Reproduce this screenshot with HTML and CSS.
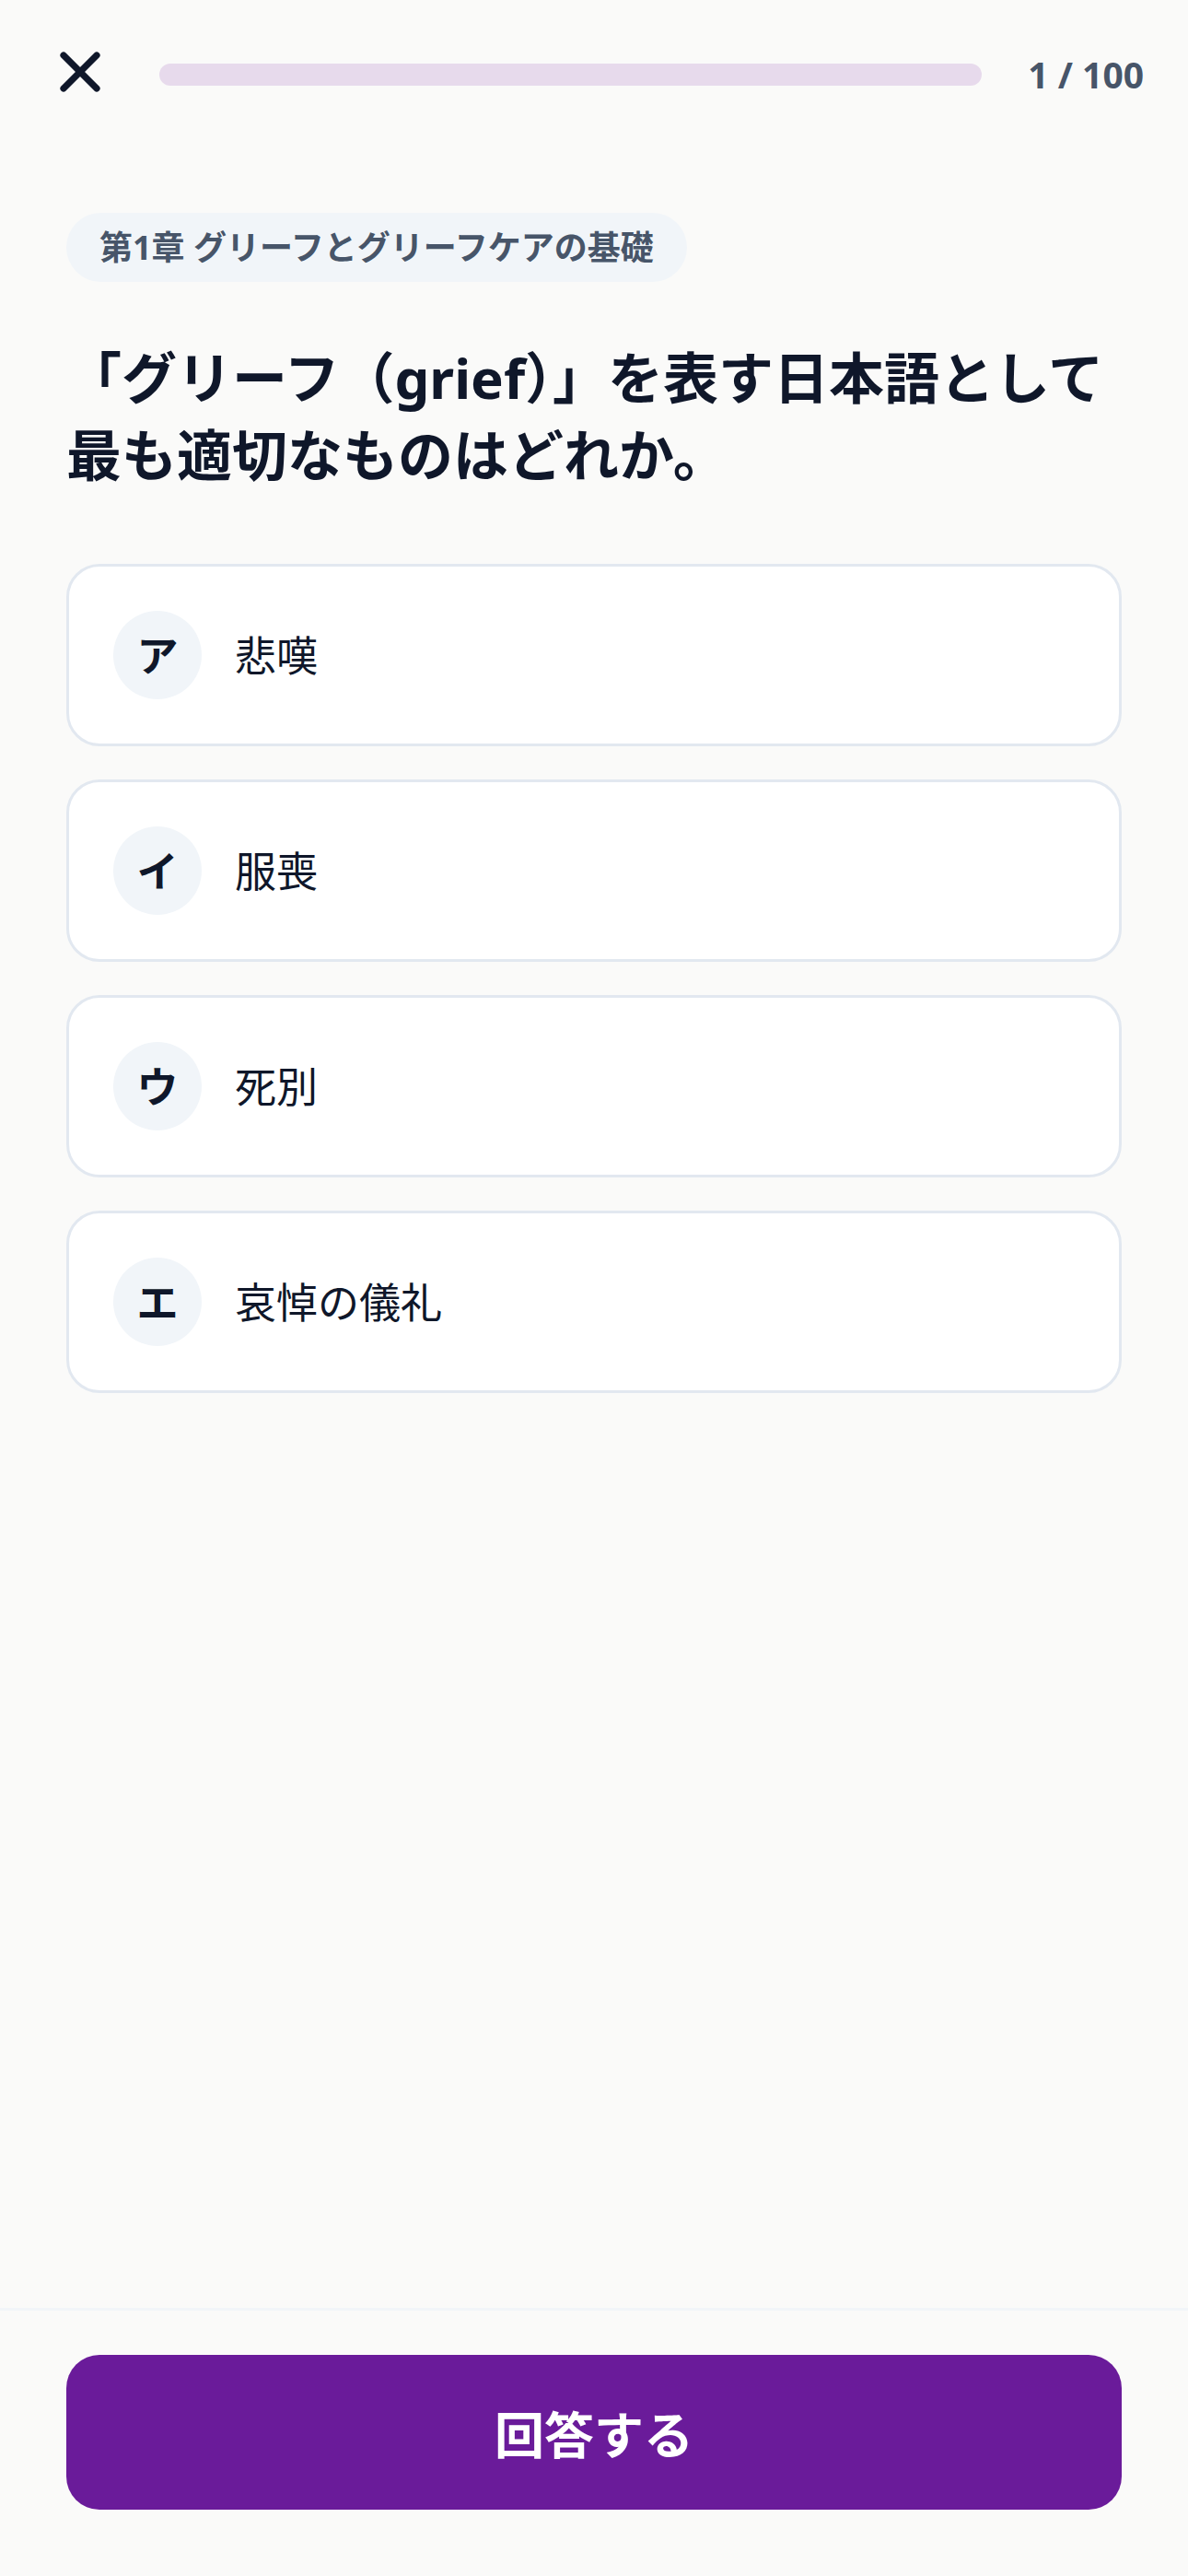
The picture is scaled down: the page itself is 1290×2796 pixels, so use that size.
FILE: index.html
```html
<!DOCTYPE html>
<html lang="ja">
<head>
  <meta charset="utf-8">
  <title>グリーフケア 問題</title>
  <meta name="viewport" content="width=device-width, initial-scale=1.0">
  <link rel="stylesheet" href="styles.css">
</head>
<body>
  <div class="page">
    <!-- ヘッダー: 閉じる / 進捗 / 問題番号 -->
    <header class="quiz-header">
      <button class="close-btn" aria-label="閉じる">
        <svg width="72" height="72" viewBox="0 0 24 24" fill="none" stroke="currentColor" stroke-width="2.4" stroke-linecap="round" stroke-linejoin="round">
          <path d="M18 6 6 18"/>
          <path d="m6 6 12 12"/>
        </svg>
      </button>
      <div class="progress"></div>
      <span class="counter">1 / 100</span>
    </header>

    <main class="quiz-body">
      <span class="chapter">第1章 グリーフとグリーフケアの基礎</span>

      <h1 class="question">「グリーフ（grief）」を表す日本語として最も適切なものはどれか。</h1>

      <!-- 選択肢 -->
      <div class="options">
        <div class="option">
          <span class="option-key">ア</span>
          <span class="option-text">悲嘆</span>
        </div>
        <div class="option">
          <span class="option-key">イ</span>
          <span class="option-text">服喪</span>
        </div>
        <div class="option">
          <span class="option-key">ウ</span>
          <span class="option-text">死別</span>
        </div>
        <div class="option">
          <span class="option-key">エ</span>
          <span class="option-text">哀悼の儀礼</span>
        </div>
      </div>
    </main>

    <footer class="quiz-footer">
      <button class="answer-btn">回答する</button>
    </footer>
  </div>
</body>
</html>
```

FILE: styles.css
```css
/* クイズ画面 (3x スケール) */
body {
  margin: 0;
  padding: 0;
  font-family: "Noto Sans", "Noto Sans CJK JP", sans-serif;
  background: #fafaf9;
  color: #0f172a;
}
.page {
  min-height: 2796px;
  display: flex;
  flex-direction: column;
}
.quiz-header {
  display: flex;
  align-items: center;
  gap: 50px;
  padding: 42px 48px 0 51px;
}
.close-btn {
  display: flex;
  width: 72px;
  height: 72px;
  padding: 0;
  border: none;
  background: none;
  color: #0f172a;
  cursor: pointer;
}
.progress {
  flex: 1;
  height: 24px;
  margin-top: 6px;
  border-radius: 12px;
  background: #e7daec;
}
.counter {
  margin-top: 4px;
  font-size: 39px;
  font-weight: 700;
  color: #475569;
  white-space: nowrap;
}
.quiz-body {
  padding: 0 72px;
}
.chapter {
  display: inline-block;
  margin-top: 117px;
  padding: 12px 36px;
  line-height: 51px;
  font-size: 36px;
  font-weight: 700;
  color: #475569;
  background: #f1f5f9;
  border-radius: 38px;
}
.question {
  margin: 62px 0 0;
  font-size: 60px;
  line-height: 84px;
  font-weight: 700;
  color: #0f172a;
}
.options {
  display: flex;
  flex-direction: column;
  gap: 36px;
  margin-top: 76px;
}
.option {
  display: flex;
  align-items: center;
  gap: 36px;
  padding: 48px;
  background: #fff;
  border: 3px solid #e2e8f0;
  border-radius: 36px;
}
.option-key {
  display: flex;
  align-items: center;
  justify-content: center;
  width: 96px;
  height: 96px;
  border-radius: 50%;
  background: #f1f5f9;
  font-size: 45px;
  line-height: 1;
  font-weight: 700;
  color: #0f172a;
}
.option-text {
  font-size: 45px;
  line-height: 1;
  color: #0f172a;
}
.quiz-footer {
  margin-top: auto;
  padding: 48px 72px 72px;
  border-top: 3px solid #f1f5f9;
}
.answer-btn {
  display: block;
  width: 100%;
  height: 168px;
  border: none;
  border-radius: 36px;
  background: #6a1b9a;
  color: #fff;
  font-family: inherit;
  font-size: 54px;
  font-weight: 700;
  cursor: pointer;
}
```
